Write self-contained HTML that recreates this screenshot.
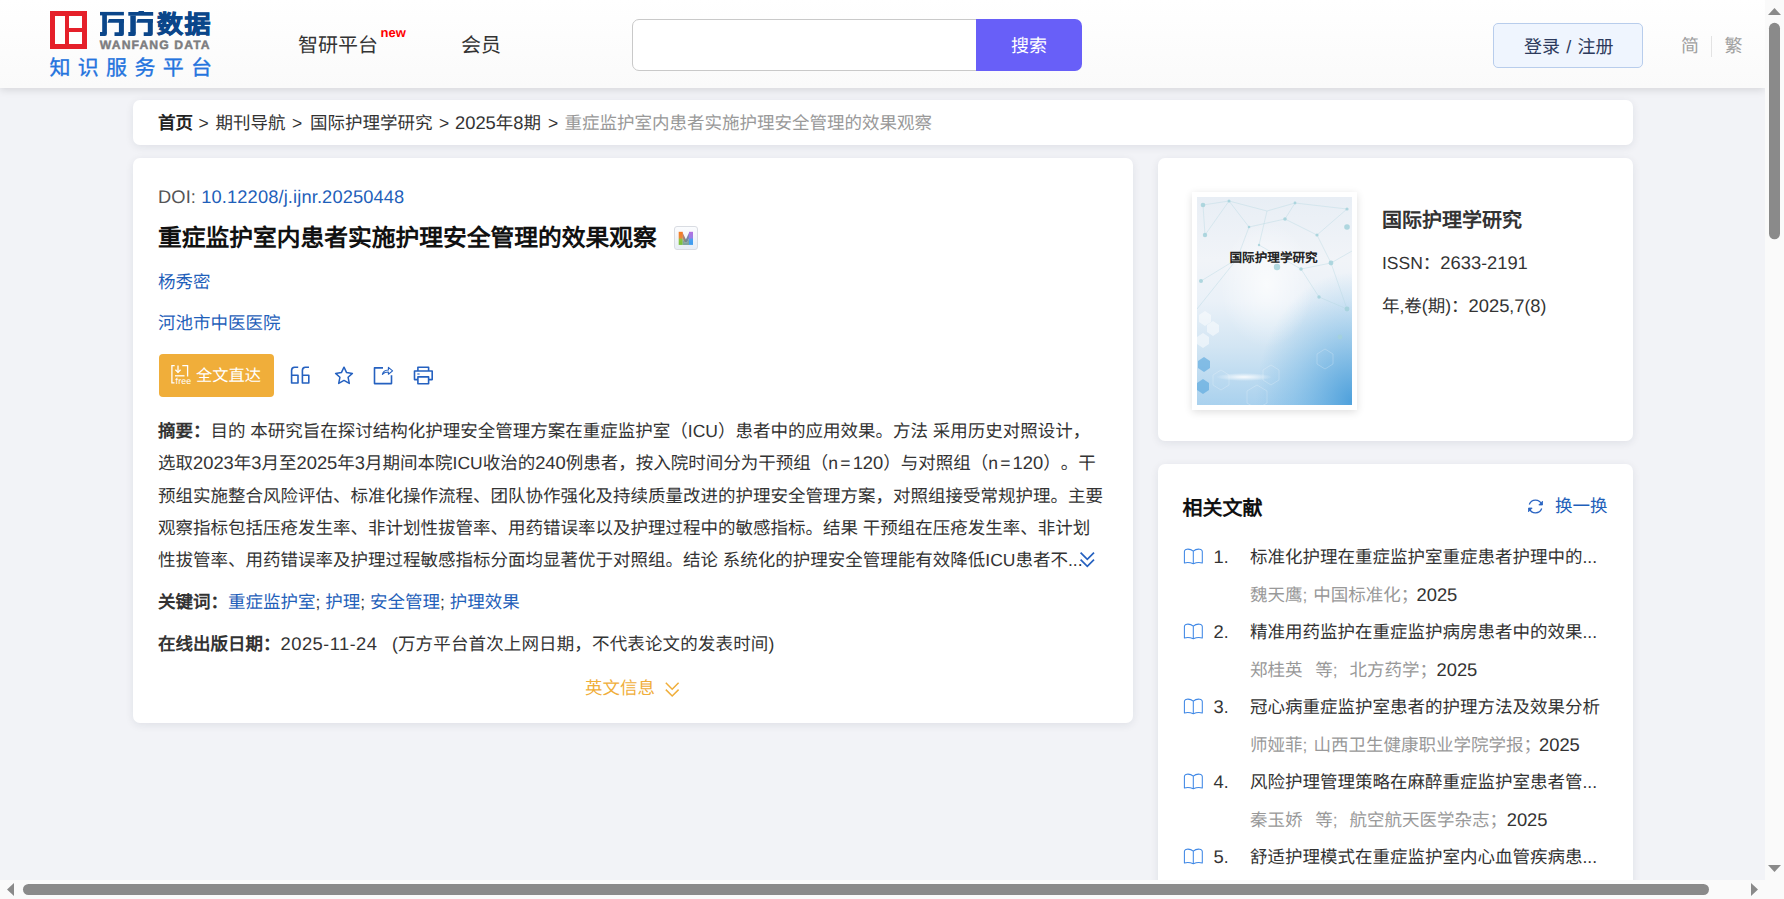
<!DOCTYPE html>
<html lang="zh-CN"><head><meta charset="utf-8">
<style>
*{margin:0;padding:0;box-sizing:border-box}
html,body{width:1784px;height:899px;overflow:hidden;background:#fafafa;font-family:"Liberation Sans",sans-serif;color:#333;text-rendering:geometricPrecision;text-spacing-trim:space-all}
#vp{position:absolute;left:0;top:0;width:1765px;height:880px;overflow:hidden;background:#f2f3f7}
.a{position:absolute;white-space:nowrap}
.d{font-size:18.35px}
.lk{color:#1f5fba}
.ne{letter-spacing:2.2px}
b{font-weight:bold}
</style></head><body>
<div id="vp">
<div class="a" style="left:0;top:0;width:1765px;height:88px;background:linear-gradient(#ffffff,#fafafa);box-shadow:0 2px 8px rgba(0,0,0,0.12)"></div>
<div class="a" style="left:50px;top:11px;width:37px;height:38px;background:#e5202a"></div>
<div class="a" style="left:54.6px;top:15.9px;width:10.1px;height:28.4px;background:#fff"></div>
<div class="a" style="left:69.3px;top:15.9px;width:13.1px;height:12.1px;background:#fff"></div>
<div class="a" style="left:69.3px;top:32.4px;width:13.1px;height:11.9px;background:#fff"></div>
<svg class="a" style="left:0;top:0" width="220" height="40" viewBox="0 0 220 40" fill="#0b468a">
<rect x="100" y="11.9" width="23.9" height="3.5"/><rect x="102.2" y="15" width="4.7" height="17.5"/>
<path d="M100 31.9 H106.9 V34 Q106.9 35.9 105 35.9 H100 Z"/>
<path d="M108.9 19.1 H123.9 V22.8 H107.5 Z"/>
<path d="M118.9 19.1 H123.9 V33.9 Q123.9 35.9 121.9 35.9 H114.5 V32.2 H118.9 Z"/>
<rect x="138.4" y="10.9" width="5.7" height="1.6" rx="0.6"/>
<rect x="128.3" y="12" width="24.9" height="3.7"/><rect x="130.3" y="15.5" width="5.5" height="17"/>
<path d="M128.3 31.9 H135.8 V34 Q135.8 35.9 134 35.9 H128.3 Z"/>
<path d="M137.6 19.1 H152.8 V22.8 H136.3 Z"/>
<path d="M147.8 19.1 H152.8 V33.9 Q152.8 35.9 150.8 35.9 H143.7 V32.2 H147.8 Z"/>
</svg>
<div class="a" style="left:156.90px;top:8.70px;font-size:26.00px;line-height:30px;color:#0b468a;font-weight:bold;letter-spacing:1.6px;-webkit-text-stroke:0.8px #0b468a;transform:scaleY(0.96);transform-origin:0 50%;">数据</div>
<div class="a" style="left:99.80px;top:38.30px;font-size:12.20px;line-height:14px;color:#7d7d80;font-weight:bold;letter-spacing:1.1px;-webkit-text-stroke:0.45px #7d7d80;">WANFANG DATA</div>
<div class="a" style="left:49.50px;top:57.40px;font-size:21.00px;line-height:24px;color:#2474de;letter-spacing:7.3px;-webkit-text-stroke:0.35px #2474de;">知识服务平台</div>
<div class="a" style="left:298.00px;top:33.20px;font-size:20.00px;line-height:26px;color:#333;">智研平台</div>
<div class="a" style="left:380.60px;top:24.80px;font-size:13.00px;line-height:16px;color:#ff0000;font-weight:bold;">new</div>
<div class="a" style="left:461.00px;top:32.60px;font-size:20.00px;line-height:26px;color:#333;">会员</div>
<div class="a" style="left:631.5px;top:18.8px;width:352px;height:52px;border:1px solid #c9c9c9;border-radius:7px 0 0 7px;background:#fff"></div>
<div class="a" style="left:975.7px;top:18.8px;width:106.3px;height:52px;background:#685ff8;border-radius:0 7px 7px 0"></div>
<div class="a" style="left:1011.00px;top:34.00px;font-size:18.00px;line-height:24px;color:#fff;">搜索</div>
<div class="a" style="left:1493px;top:23px;width:150px;height:45px;border:1px solid #b8cdec;border-radius:5px;background:#eff5fe"></div>
<div class="a" style="left:1524.00px;top:34.80px;font-size:18.00px;line-height:24px;color:#2d3a5c;word-spacing:1.3px;">登录 / 注册</div>
<div class="a" style="left:1681.00px;top:34.00px;font-size:18.00px;line-height:24px;color:#a0a0a0;">简</div>
<div class="a" style="left:1711px;top:36px;width:1px;height:21px;background:#e3e3e3"></div>
<div class="a" style="left:1724.50px;top:34.00px;font-size:18.00px;line-height:24px;color:#a0a0a0;">繁</div>
<div class="a" style="left:133px;top:100px;width:1500px;height:45px;background:#fff;border-radius:7px;box-shadow:0 2px 8px rgba(20,30,60,0.085)"></div>
<div class="a" style="left:158.00px;top:110.60px;font-size:17.50px;line-height:24px;color:#222;font-weight:bold;">首页</div>
<div class="a" style="left:198.50px;top:110.60px;font-size:17.50px;line-height:24px;color:#333;">&gt;</div>
<div class="a" style="left:215.50px;top:110.60px;font-size:17.50px;line-height:24px;color:#333;">期刊导航</div>
<div class="a" style="left:292.00px;top:110.60px;font-size:17.50px;line-height:24px;color:#333;">&gt;</div>
<div class="a" style="left:310.00px;top:110.60px;font-size:17.50px;line-height:24px;color:#333;">国际护理学研究</div>
<div class="a" style="left:439.00px;top:110.60px;font-size:17.50px;line-height:24px;color:#333;">&gt;</div>
<div class="a" style="left:455.00px;top:110.60px;font-size:17.50px;line-height:24px;color:#333;"><span class="d">2025</span>年<span class="d">8</span>期</div>
<div class="a" style="left:548.00px;top:110.60px;font-size:17.50px;line-height:24px;color:#333;">&gt;</div>
<div class="a" style="left:564.50px;top:110.60px;font-size:17.50px;line-height:24px;color:#999;">重症监护室内患者实施护理安全管理的效果观察</div>
<div class="a" style="left:133px;top:158px;width:1000px;height:565px;background:#fff;border-radius:7px;box-shadow:0 2px 8px rgba(20,30,60,0.085)"></div>
<div class="a" style="left:158.00px;top:185.00px;font-size:18.30px;line-height:24px;color:#555;letter-spacing:0.12px;">DOI: <span class="lk">10.12208/j.ijnr.20250448</span></div>
<div class="a" style="left:158.00px;top:223.80px;font-size:23.75px;line-height:30px;color:#111;font-weight:bold;">重症监护室内患者实施护理安全管理的效果观察</div>
<div class="a" style="left:674px;top:226px;width:24px;height:24px;border:1px solid #d9dce2;border-radius:3px;background:linear-gradient(#fbfcfe,#e8eef6)"></div>
<svg class="a" style="left:678px;top:231px" width="16" height="15" viewBox="0 0 16 15">
<defs><linearGradient id="mg1" x1="0" y1="0" x2="0" y2="1"><stop offset="0" stop-color="#f57a22"/><stop offset="0.45" stop-color="#e88a3a"/><stop offset="0.6" stop-color="#8cc540"/><stop offset="1" stop-color="#76bf3c"/></linearGradient>
<linearGradient id="mg2" x1="0" y1="0" x2="0" y2="1"><stop offset="0" stop-color="#b36fe0"/><stop offset="0.45" stop-color="#9a7ee6"/><stop offset="0.6" stop-color="#4aa0f0"/><stop offset="1" stop-color="#3d9cf0"/></linearGradient>
<linearGradient id="mg3" x1="0" y1="0" x2="1" y2="0"><stop offset="0" stop-color="#d97a6a"/><stop offset="0.5" stop-color="#6c8c88"/><stop offset="1" stop-color="#8a7fd0"/></linearGradient></defs>
<polygon points="4.2,0.8 7.9,8.5 11.5,0.8 11.5,6.5 9.2,11.6 6.6,11.6 4.2,6.5" fill="url(#mg3)"/>
<rect x="0.7" y="0.8" width="4" height="13.1" fill="url(#mg1)"/>
<rect x="11" y="0.8" width="4" height="13.1" fill="url(#mg2)"/>
<polygon points="4.7,7.5 6.6,11.6 9.2,11.6 11,7.5 11,13.9 4.7,13.9" fill="#5b8a80" opacity="0.75"/>
</svg>
<div class="a" style="left:158.00px;top:270.10px;font-size:17.50px;line-height:24px;color:#1f5fba;">杨秀密</div>
<div class="a" style="left:158.00px;top:310.80px;font-size:17.50px;line-height:24px;color:#1f5fba;">河池市中医医院</div>
<div class="a" style="left:159px;top:354.2px;width:115px;height:42.6px;background:#f0ae3a;border-radius:4px"></div>
<svg class="a" style="left:170px;top:364px" width="22" height="21" viewBox="0 0 22 21" fill="none" stroke="#fff" stroke-width="1.3">
<path d="M4.7 1.6 H1.9 V18.9 H4.5"/><path d="M12.3 1.6 H17.6 V12.4"/>
<path d="M8 1.4 V8.4"/><path d="M5.4 5.7 L8 8.4 L10.6 5.7"/><path d="M5 11.8 H14.5"/>
<text x="5.6" y="19.6" font-family="Liberation Sans" font-size="8.8" fill="#fff" stroke="none" letter-spacing="0.15">free</text>
</svg>
<div class="a" style="left:196.00px;top:365.00px;font-size:16.25px;line-height:22px;color:#fff;">全文直达</div>
<svg class="a" style="left:290px;top:366px" width="21" height="19" viewBox="0 0 21 19" fill="none" stroke="#2561c0" stroke-width="1.6" stroke-linejoin="round">
<path d="M8.2 1.3 H4.6 Q1.6 1.3 1.6 4.6 V17 H8 V9.2 H1.6"/>
<path d="M19 1.3 H15.4 Q12.4 1.3 12.4 4.6 V17 H18.8 V9.2 H12.4"/>
</svg>
<svg class="a" style="left:334px;top:365.5px" width="20" height="19" viewBox="0 0 20 19" fill="none" stroke="#2561c0" stroke-width="1.5" stroke-linejoin="round">
<path d="M10 1.2 L12.6 6.6 L18.4 7.4 L14.1 11.3 L15.3 17.4 L10 14.4 L4.7 17.4 L5.9 11.3 L1.6 7.4 L7.4 6.6 Z"/>
</svg>
<svg class="a" style="left:373px;top:365.5px" width="21" height="19" viewBox="0 0 21 19" fill="none" stroke="#2561c0" stroke-width="1.6" stroke-linejoin="round">
<path d="M10 1.9 H1.5 V17.6 H18.5 V9.3"/>
<path d="M9.4 8.3 Q10.3 4.2 15.4 4 V1.4 L19.6 4.9 L15.4 8.2 V6 Q11.6 6 9.4 8.3 Z" stroke-width="1.1"/>
</svg>
<svg class="a" style="left:413px;top:365.5px" width="21" height="19" viewBox="0 0 21 19" fill="none" stroke="#2561c0" stroke-width="1.6" stroke-linejoin="round">
<path d="M4.9 4.9 V1.3 H15.6 V4.9"/>
<path d="M4.9 13.6 H1.5 V5 H19.2 V13.6 H15.6"/>
<rect x="4.9" y="10.9" width="10.7" height="6.8"/>
<path d="M4.3 8 H6.6" stroke-width="1.1"/>
</svg>
<div class="a" style="left:158.00px;top:415.00px;font-size:17.50px;line-height:32px;color:#333;"><b>摘要：</b>目的 本研究旨在探讨结构化护理安全管理方案在重症监护室（ICU）患者中的应用效果。方法 采用历史对照设计，</div>
<div class="a" style="left:158.00px;top:447.35px;font-size:17.50px;line-height:32px;color:#333;">选取<span class="d">2023</span>年<span class="d">3</span>月至<span class="d">2025</span>年<span class="d">3</span>月期间本院ICU收治的<span class="d">240</span>例患者，按入院时间分为干预组（<span class="ne">n=</span><span class="d">120</span>）与对照组（<span class="ne">n=</span><span class="d">120</span>）。干</div>
<div class="a" style="left:158.00px;top:479.70px;font-size:17.50px;line-height:32px;color:#333;">预组实施整合风险评估、标准化操作流程、团队协作强化及持续质量改进的护理安全管理方案，对照组接受常规护理。主要</div>
<div class="a" style="left:158.00px;top:512.05px;font-size:17.50px;line-height:32px;color:#333;">观察指标包括压疮发生率、非计划性拔管率、用药错误率以及护理过程中的敏感指标。结果 干预组在压疮发生率、非计划</div>
<div class="a" style="left:158.00px;top:544.40px;font-size:17.50px;line-height:32px;color:#333;">性拔管率、用药错误率及护理过程敏感指标分面均显著优于对照组。结论 系统化的护理安全管理能有效降低ICU患者不...</div>
<svg class="a" style="left:1079px;top:551px" width="17" height="17" viewBox="0 0 17 17" fill="none" stroke="#2561c0" stroke-width="1.7">
<path d="M1.6 1.6 L8.3 8.3 L15 1.6"/><path d="M1.6 8.6 L8.3 15.3 L15 8.6"/>
</svg>
<div class="a" style="left:158.00px;top:589.50px;font-size:17.50px;line-height:24px;color:#333;"><b>关键词：</b><span class="lk">重症监护室</span>; <span class="lk">护理</span>; <span class="lk">安全管理</span>; <span class="lk">护理效果</span></div>
<div class="a" style="left:158.00px;top:631.80px;font-size:17.50px;line-height:24px;color:#333;"><b>在线出版日期：</b></div>
<div class="a" style="left:280.50px;top:631.80px;font-size:17.50px;line-height:24px;color:#333;letter-spacing:0.5px;"><span class="d">2025</span>-<span class="d">11</span>-<span class="d">24</span></div>
<div class="a" style="left:392.00px;top:631.80px;font-size:17.50px;line-height:24px;color:#333;letter-spacing:0.14px;">(万方平台首次上网日期，不代表论文的发表时间)</div>
<div class="a" style="left:585.00px;top:675.60px;font-size:17.50px;line-height:24px;color:#f0ae3a;">英文信息</div>
<svg class="a" style="left:664px;top:681px" width="17" height="17" viewBox="0 0 17 17" fill="none" stroke="#f0ae3a" stroke-width="1.5">
<path d="M1.8 1.8 L8.2 8.2 L14.6 1.8"/><path d="M1.8 8.6 L8.2 15 L14.6 8.6"/>
</svg>
<div class="a" style="left:1158px;top:158px;width:475px;height:283px;background:#fff;border-radius:7px;box-shadow:0 2px 8px rgba(20,30,60,0.085)"></div>
<div class="a" style="left:1191.5px;top:192px;width:165px;height:218px;background:#fff;box-shadow:0 2px 8px rgba(0,0,0,0.13)"></div>
<svg class="a" style="left:1196.5px;top:196.5px" width="155" height="208.5" viewBox="0 0 155 208.5">
<defs>
<linearGradient id="cg" x1="0" y1="0" x2="0" y2="1">
<stop offset="0" stop-color="#e8eef5"/><stop offset="0.3" stop-color="#f1f4f8"/><stop offset="0.5" stop-color="#eaf1f8"/><stop offset="0.72" stop-color="#d2e5f3"/><stop offset="1" stop-color="#a9d1ee"/>
</linearGradient>
<radialGradient id="cb" cx="1" cy="0.98" r="0.62"><stop offset="0" stop-color="#3f98d8" stop-opacity="0.85"/><stop offset="0.6" stop-color="#5aaae0" stop-opacity="0.35"/><stop offset="1" stop-color="#5aaae0" stop-opacity="0"/></radialGradient>
<radialGradient id="cr" cx="0.45" cy="0.42" r="0.3"><stop offset="0" stop-color="#ffffff" stop-opacity="0.7"/><stop offset="1" stop-color="#ffffff" stop-opacity="0"/></radialGradient>
<radialGradient id="glare" cx="0.5" cy="0.5" r="0.5"><stop offset="0" stop-color="#fff" stop-opacity="1"/><stop offset="1" stop-color="#fff" stop-opacity="0"/></radialGradient>
</defs>
<rect width="155" height="208.5" fill="url(#cg)"/>
<rect width="155" height="208.5" fill="url(#cb)"/>
<rect width="155" height="208.5" fill="url(#cr)"/>
<g stroke="#b3d8e0" stroke-width="0.5" fill="none" opacity="0.8">
<path d="M6 8 L32 4 L70 14 L98 6 L150 12 M6 8 L8 38 L32 4 L52 30 L88 22 L98 6 M52 30 L40 62 L4 84 M88 22 L120 38 L150 12 M120 38 L134 66 L155 54 M70 14 L62 48 L104 72 L134 66 M0 112 L40 62 M104 72 L122 100 L150 112 M134 66 L150 112"/>
</g>
<g fill="#a4d2db" opacity="0.85">
<circle cx="6" cy="8" r="2.3"/><circle cx="32" cy="4" r="1.5"/><circle cx="8" cy="38" r="2.2"/><circle cx="52" cy="30" r="1.3"/><circle cx="88" cy="22" r="1.8"/><circle cx="98" cy="6" r="1.4"/><circle cx="120" cy="38" r="1.6"/><circle cx="40" cy="62" r="1.3"/><circle cx="104" cy="72" r="1.8"/><circle cx="62" cy="48" r="1.2"/><circle cx="134" cy="66" r="2.4"/><circle cx="150" cy="12" r="1.6"/><circle cx="4" cy="84" r="2"/><circle cx="80" cy="70" r="3.2"/><circle cx="122" cy="100" r="1.7"/><circle cx="150" cy="112" r="2.4"/><circle cx="150" cy="30" r="2.8"/><circle cx="143" cy="140" r="2.4"/>
</g>
<g fill="#ffffff" opacity="0.5">
<polygon points="2,118 8,114 14,118 14,125 8,129 2,125"/><polygon points="10,128 16,124 22,128 22,135 16,139 10,135"/><polygon points="0,140 6,136 12,140 12,147 6,151 0,147"/>
</g>
<g fill="#4aa0dc" opacity="0.55">
<polygon points="1,164 7,160 13,164 13,171 7,175 1,171"/><polygon points="0,186 6,182 12,186 12,193 6,197 0,193"/>
</g>
<g fill="none" stroke="#ffffff" stroke-width="0.5" opacity="0.45">
<polygon points="16,178 24,173 32,178 32,188 24,193 16,188"/><polygon points="66,173 74,168 82,173 82,183 74,188 66,183"/><polygon points="120,157 128,152 136,157 136,167 128,172 120,167"/><polygon points="50,194 60,188 70,194 70,206 60,212 50,206"/>
</g>
<ellipse cx="47" cy="180" rx="28" ry="4" fill="url(#glare)" opacity="0.9"/>
</svg>

<div class="a" style="left:1229.50px;top:250.00px;font-size:12.60px;line-height:16px;color:#222;font-weight:bold;">国际护理学研究</div>
<div class="a" style="left:1382.00px;top:208.00px;font-size:20.00px;line-height:26px;color:#333;font-weight:bold;">国际护理学研究</div>
<div class="a" style="left:1382.00px;top:251.00px;font-size:17.50px;line-height:24px;color:#333;">ISSN：<span class="d">2633</span>-<span class="d">2191</span></div>
<div class="a" style="left:1382.00px;top:293.60px;font-size:17.50px;line-height:24px;color:#333;">年,卷(期)：<span class="d">2025</span>,<span class="d">7</span>(<span class="d">8</span>)</div>
<div class="a" style="left:1158px;top:464px;width:475px;height:520px;background:#fff;border-radius:7px;box-shadow:0 2px 8px rgba(20,30,60,0.085)"></div>
<div class="a" style="left:1182.50px;top:496.00px;font-size:20.00px;line-height:26px;color:#111;font-weight:bold;">相关文献</div>
<svg class="a" style="left:1527px;top:498px" width="17" height="17" viewBox="0 0 17 17" fill="none" stroke="#2a64c2" stroke-width="1.3">
<path d="M14.6 6.2 A6.6 6.6 0 0 0 2.3 6.4"/><path d="M2.4 10.8 A6.6 6.6 0 0 0 14.7 10.6"/>
<path d="M15.5 3.2 V7 H11.8 Z" fill="#2a64c2" stroke-width="0.8" stroke-linejoin="round"/><path d="M1.5 13.8 V10 H5.2 Z" fill="#2a64c2" stroke-width="0.8" stroke-linejoin="round"/>
</svg>
<div class="a" style="left:1555.00px;top:494.40px;font-size:17.50px;line-height:24px;color:#1f5fba;">换一换</div>
<svg class="a" style="left:1183px;top:548.0px" width="21" height="17" viewBox="0 0 21 17" fill="none" stroke="#3f88e6" stroke-width="1.05" stroke-linejoin="round">
<path d="M10.3 3.2 Q7.5 0.8 4 1.2 Q1.5 1.5 1.4 3.5 V15 Q5.5 13.5 10.3 15.8 Q15 13.5 19.3 15 V3.5 Q19.2 1.5 16.6 1.2 Q13 0.8 10.3 3.2 V15.8"/>
</svg>
<div class="a" style="left:1213.50px;top:545.40px;font-size:17.50px;line-height:24px;color:#333;"><span class="d">1</span>.</div>
<div class="a" style="left:1250.00px;top:545.40px;font-size:17.50px;line-height:24px;color:#333;">标准化护理在重症监护室重症患者护理中的...</div>
<div class="a" style="left:1250.00px;top:582.60px;font-size:17.50px;line-height:24px;color:#999;">魏天鹰;</div>
<div class="a" style="left:1313.30px;top:582.60px;font-size:17.50px;line-height:24px;color:#999;">中国标准化</div>
<div class="a" style="left:1400.80px;top:582.60px;font-size:17.50px;line-height:24px;color:#999;">；</div>
<div class="a" style="left:1416.50px;top:582.60px;font-size:17.50px;line-height:24px;color:#333;"><span class="d">2025</span></div>
<svg class="a" style="left:1183px;top:623.0px" width="21" height="17" viewBox="0 0 21 17" fill="none" stroke="#3f88e6" stroke-width="1.05" stroke-linejoin="round">
<path d="M10.3 3.2 Q7.5 0.8 4 1.2 Q1.5 1.5 1.4 3.5 V15 Q5.5 13.5 10.3 15.8 Q15 13.5 19.3 15 V3.5 Q19.2 1.5 16.6 1.2 Q13 0.8 10.3 3.2 V15.8"/>
</svg>
<div class="a" style="left:1213.50px;top:620.40px;font-size:17.50px;line-height:24px;color:#333;"><span class="d">2</span>.</div>
<div class="a" style="left:1250.00px;top:620.40px;font-size:17.50px;line-height:24px;color:#333;">精准用药监护在重症监护病房患者中的效果...</div>
<div class="a" style="left:1250.00px;top:657.60px;font-size:17.50px;line-height:24px;color:#999;">郑桂英</div>
<div class="a" style="left:1315.30px;top:657.60px;font-size:17.50px;line-height:24px;color:#999;">等;</div>
<div class="a" style="left:1349.60px;top:657.60px;font-size:17.50px;line-height:24px;color:#999;">北方药学</div>
<div class="a" style="left:1419.60px;top:657.60px;font-size:17.50px;line-height:24px;color:#999;">；</div>
<div class="a" style="left:1436.50px;top:657.60px;font-size:17.50px;line-height:24px;color:#333;"><span class="d">2025</span></div>
<svg class="a" style="left:1183px;top:698.0px" width="21" height="17" viewBox="0 0 21 17" fill="none" stroke="#3f88e6" stroke-width="1.05" stroke-linejoin="round">
<path d="M10.3 3.2 Q7.5 0.8 4 1.2 Q1.5 1.5 1.4 3.5 V15 Q5.5 13.5 10.3 15.8 Q15 13.5 19.3 15 V3.5 Q19.2 1.5 16.6 1.2 Q13 0.8 10.3 3.2 V15.8"/>
</svg>
<div class="a" style="left:1213.50px;top:695.40px;font-size:17.50px;line-height:24px;color:#333;"><span class="d">3</span>.</div>
<div class="a" style="left:1250.00px;top:695.40px;font-size:17.50px;line-height:24px;color:#333;">冠心病重症监护室患者的护理方法及效果分析</div>
<div class="a" style="left:1250.00px;top:732.60px;font-size:17.50px;line-height:24px;color:#999;">师娅菲;</div>
<div class="a" style="left:1313.50px;top:732.60px;font-size:17.50px;line-height:24px;color:#999;">山西卫生健康职业学院学报</div>
<div class="a" style="left:1523.50px;top:732.60px;font-size:17.50px;line-height:24px;color:#999;">；</div>
<div class="a" style="left:1539.00px;top:732.60px;font-size:17.50px;line-height:24px;color:#333;"><span class="d">2025</span></div>
<svg class="a" style="left:1183px;top:773.0px" width="21" height="17" viewBox="0 0 21 17" fill="none" stroke="#3f88e6" stroke-width="1.05" stroke-linejoin="round">
<path d="M10.3 3.2 Q7.5 0.8 4 1.2 Q1.5 1.5 1.4 3.5 V15 Q5.5 13.5 10.3 15.8 Q15 13.5 19.3 15 V3.5 Q19.2 1.5 16.6 1.2 Q13 0.8 10.3 3.2 V15.8"/>
</svg>
<div class="a" style="left:1213.50px;top:770.40px;font-size:17.50px;line-height:24px;color:#333;"><span class="d">4</span>.</div>
<div class="a" style="left:1250.00px;top:770.40px;font-size:17.50px;line-height:24px;color:#333;">风险护理管理策略在麻醉重症监护室患者管...</div>
<div class="a" style="left:1250.00px;top:807.60px;font-size:17.50px;line-height:24px;color:#999;">秦玉娇</div>
<div class="a" style="left:1315.30px;top:807.60px;font-size:17.50px;line-height:24px;color:#999;">等;</div>
<div class="a" style="left:1349.40px;top:807.60px;font-size:17.50px;line-height:24px;color:#999;">航空航天医学杂志</div>
<div class="a" style="left:1489.40px;top:807.60px;font-size:17.50px;line-height:24px;color:#999;">；</div>
<div class="a" style="left:1506.70px;top:807.60px;font-size:17.50px;line-height:24px;color:#333;"><span class="d">2025</span></div>
<svg class="a" style="left:1183px;top:848.0px" width="21" height="17" viewBox="0 0 21 17" fill="none" stroke="#3f88e6" stroke-width="1.05" stroke-linejoin="round">
<path d="M10.3 3.2 Q7.5 0.8 4 1.2 Q1.5 1.5 1.4 3.5 V15 Q5.5 13.5 10.3 15.8 Q15 13.5 19.3 15 V3.5 Q19.2 1.5 16.6 1.2 Q13 0.8 10.3 3.2 V15.8"/>
</svg>
<div class="a" style="left:1213.50px;top:845.40px;font-size:17.50px;line-height:24px;color:#333;"><span class="d">5</span>.</div>
<div class="a" style="left:1250.00px;top:845.40px;font-size:17.50px;line-height:24px;color:#333;">舒适护理模式在重症监护室内心血管疾病患...</div>
</div>
<div class="a" style="left:1765px;top:0;width:19px;height:899px;background:#fafafa"></div>
<div class="a" style="left:0;top:880px;width:1784px;height:19px;background:#fafafa"></div>
<svg class="a" style="left:1765px;top:0" width="19" height="880" viewBox="0 0 19 880">
<polygon points="3,15 16,15 9.5,8" fill="#8a8a8a"/>
<rect x="4" y="22.8" width="11" height="216.5" rx="5.5" fill="#8a8a8a"/>
<polygon points="3,865 16,865 9.5,872" fill="#8a8a8a"/>
</svg>
<svg class="a" style="left:0;top:880px" width="1784" height="19" viewBox="0 0 1784 19">
<polygon points="14,3 14,16 7,9.5" fill="#8a8a8a"/>
<rect x="23" y="4" width="1686" height="11" rx="5.5" fill="#8a8a8a"/>
<polygon points="1751,3 1751,16 1758,9.5" fill="#8a8a8a"/>
</svg>
</body></html>
